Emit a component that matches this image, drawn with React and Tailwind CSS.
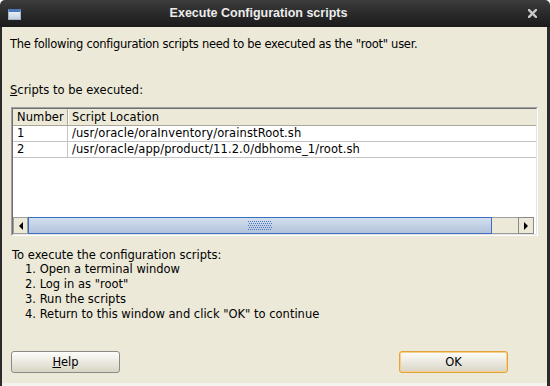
import React from "react";

const steps = [
  "1. Open a terminal window",
  "2. Log in as \"root\"",
  "3. Run the scripts",
  "4. Return to this window and click \"OK\" to continue",
];

const scripts = [
  { id: 1, location: "/usr/oracle/oraInventory/orainstRoot.sh" },
  { id: 2, location: "/usr/oracle/app/product/11.2.0/dbhome_1/root.sh" },
];

const Grip = () => {
  const dots = [];
  for (let y = 0; y < 10; y += 2) {
    for (let x = 0; x < 24; x += 2) {
      dots.push(<rect key={`${x}-${y}`} x={x + (y % 4 === 0 ? 0 : 1)} y={y} width="1" height="1" fill="#4f78c4" />);
    }
  }
  return (
    <svg width="24" height="10" viewBox="0 0 24 10">
      {dots}
    </svg>
  );
};

const ScrollBar = () => (
  <div className="flex h-[17px] shrink-0">
    <div className="w-[15px] flex items-center justify-center bg-[#ece9d8] border border-[#9d9d9d]">
      <svg width="4" height="8" viewBox="0 0 4 8">
        <polygon points="4,0 0,4 4,8" fill="#000" />
      </svg>
    </div>
    <div className="w-[464px] flex items-center justify-center border border-[#3d6ec2] bg-gradient-to-b from-[#d3dfee] to-[#b2c3da]">
      <Grip />
    </div>
    <div className="w-[26px] bg-[#ece9d8] border-y border-[#9d9d9d]" />
    <div className="w-[16px] flex items-center justify-center bg-[#ece9d8] border border-[#8a8a8a]">
      <svg width="4" height="8" viewBox="0 0 4 8">
        <polygon points="0,0 4,4 0,8" fill="#000" />
      </svg>
    </div>
  </div>
);

const ScriptsTable = () => (
  <div className="mx-[9px] mt-[9.5px] h-[129px] flex border border-t-[#a0a0a0] border-l-[#a0a0a0] border-r-white border-b-white">
    <div className="flex-1 flex flex-col border border-t-[#6f6f6f] border-l-[#6f6f6f] border-r-[#e4e4e4] border-b-[#e4e4e4] bg-white tracking-[0.1px]">
      <div className="flex h-[17px] shrink-0 bg-[#ece9d8] border-b border-[#aca899]">
        <div className="w-[55px] pl-[4px] leading-[16px] border-r border-[#aca899]">Number</div>
        <div className="flex-1 pl-[3px] leading-[16px] border-l border-white">Script Location</div>
      </div>
      {scripts.map((row) => (
        <div key={row.id} className="flex h-[16px] shrink-0 border-b border-[#c4c4c4]">
          <div className="w-[55px] pl-[4px] leading-[15px] border-r border-[#c4c4c4]">{row.id}</div>
          <div className="flex-1 pl-[4px] leading-[15px]">{row.location}</div>
        </div>
      ))}
      <div className="flex-1" />
      <ScrollBar />
    </div>
  </div>
);

export default function App() {
  return (
    <div
      className="w-[550px] h-[386px] flex flex-col bg-white text-[11.5px] text-black"
      style={{ fontFamily: '"DejaVu Sans", Verdana, sans-serif' }}
    >
      {/* Title bar */}
      <div className="h-[27px] shrink-0 flex items-center rounded-t-[5px] bg-gradient-to-b from-[#3d3d3d] via-[#2a2a2a] to-[#1b1b1b]">
        <div className="ml-[8px] w-[13px] h-[11px] mt-[1px] border border-[#9fb3cc] bg-gradient-to-b from-[#e9eef5] to-[#c4cfdc] border-t-[3px] border-t-[#4a78bf]" />
        <div
          className="flex-1 pr-[32px] text-center text-[12.5px] font-bold text-[#ececec]"
          style={{ fontFamily: '"Liberation Sans", Arial, sans-serif' }}
        >
          Execute Configuration scripts
        </div>
        <svg className="mr-[13px]" width="9" height="9" viewBox="0 0 9 9">
          <path d="M1 1 L8 8 M8 1 L1 8" stroke="#c9c9c9" strokeWidth="2.4" strokeLinecap="square" />
        </svg>
      </div>

      {/* Body */}
      <div className="flex-1 flex flex-col bg-[#ece9d8] border-l-2 border-r-[3px] border-[#2b2b2b]">
        <p className="pl-[8px] pt-[9.5px] leading-[15px] tracking-[-0.28px]">
          The following configuration scripts need to be executed as the "root" user.
        </p>
        <p className="pl-[8px] mt-[31px] leading-[15px]">
          <span className="underline">S</span>cripts to be executed:
        </p>

        <ScriptsTable />

        <div className="mt-[11.5px] pl-[10px] leading-[14.8px]">
          <p>To execute the configuration scripts:</p>
          {steps.map((s) => (
            <p key={s} className="pl-[13px]">{s}</p>
          ))}
        </div>

        <div className="flex-1" />

        <div className="flex justify-between pl-[9px] pr-[39px] mb-[10px]">
          <button className="w-[109px] h-[22px] rounded-[3px] border border-[#8a8a8a] bg-gradient-to-b from-[#fdfdfb] to-[#d9d5c5] leading-[20px]">
            <span className="underline">H</span>elp
          </button>
          <button className="w-[109px] h-[22px] rounded-[3px] border border-[#e2a33c] shadow-[inset_0_0_0_1px_#f6cf8c] bg-gradient-to-b from-[#fdfdfb] to-[#d9d5c5] leading-[20px]">
            OK
          </button>
        </div>
        <div className="h-[3px] bg-[#f3f2ec]" />
      </div>
    </div>
  );
}
